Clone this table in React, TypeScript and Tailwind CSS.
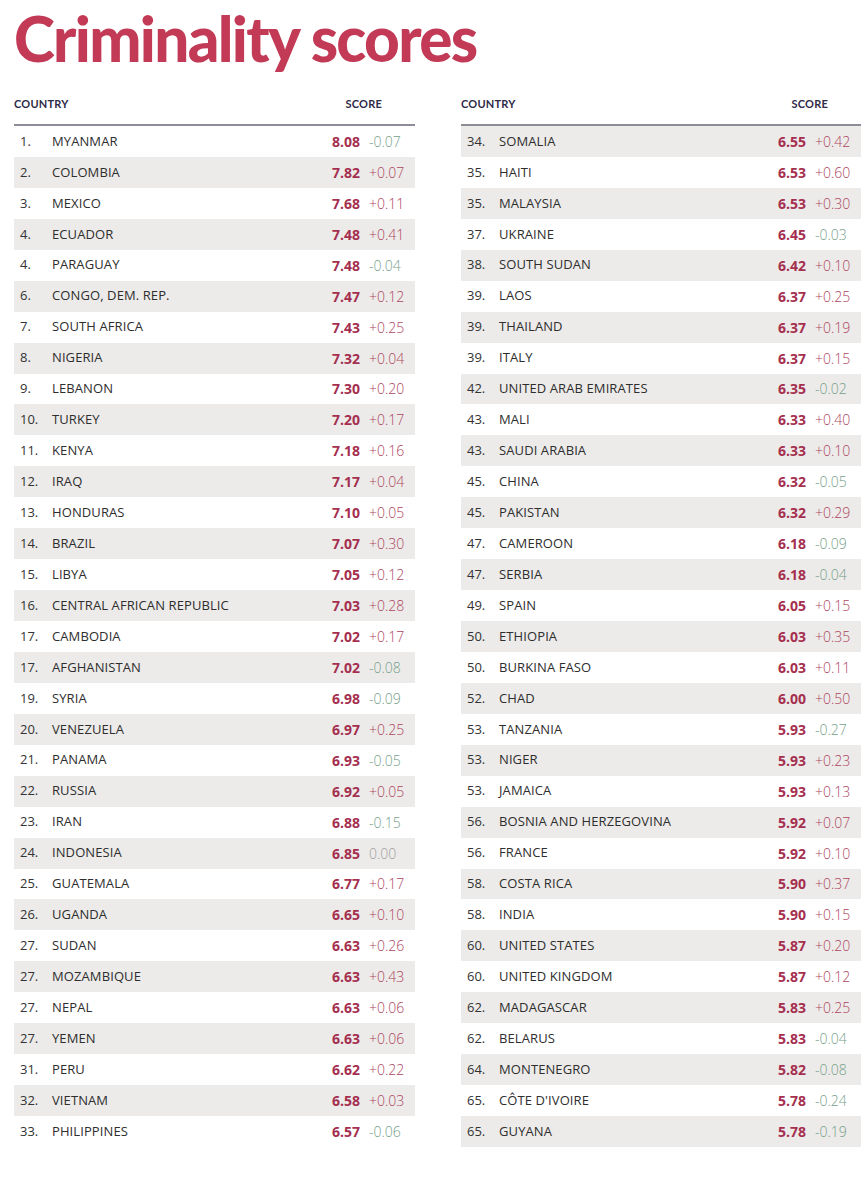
import React from "react";

type Row = [string, string, string, string];

const left: Row[] = [
  ["1.", "MYANMAR", "8.08", "-0.07"],
  ["2.", "COLOMBIA", "7.82", "+0.07"],
  ["3.", "MEXICO", "7.68", "+0.11"],
  ["4.", "ECUADOR", "7.48", "+0.41"],
  ["4.", "PARAGUAY", "7.48", "-0.04"],
  ["6.", "CONGO, DEM. REP.", "7.47", "+0.12"],
  ["7.", "SOUTH AFRICA", "7.43", "+0.25"],
  ["8.", "NIGERIA", "7.32", "+0.04"],
  ["9.", "LEBANON", "7.30", "+0.20"],
  ["10.", "TURKEY", "7.20", "+0.17"],
  ["11.", "KENYA", "7.18", "+0.16"],
  ["12.", "IRAQ", "7.17", "+0.04"],
  ["13.", "HONDURAS", "7.10", "+0.05"],
  ["14.", "BRAZIL", "7.07", "+0.30"],
  ["15.", "LIBYA", "7.05", "+0.12"],
  ["16.", "CENTRAL AFRICAN REPUBLIC", "7.03", "+0.28"],
  ["17.", "CAMBODIA", "7.02", "+0.17"],
  ["17.", "AFGHANISTAN", "7.02", "-0.08"],
  ["19.", "SYRIA", "6.98", "-0.09"],
  ["20.", "VENEZUELA", "6.97", "+0.25"],
  ["21.", "PANAMA", "6.93", "-0.05"],
  ["22.", "RUSSIA", "6.92", "+0.05"],
  ["23.", "IRAN", "6.88", "-0.15"],
  ["24.", "INDONESIA", "6.85", "0.00"],
  ["25.", "GUATEMALA", "6.77", "+0.17"],
  ["26.", "UGANDA", "6.65", "+0.10"],
  ["27.", "SUDAN", "6.63", "+0.26"],
  ["27.", "MOZAMBIQUE", "6.63", "+0.43"],
  ["27.", "NEPAL", "6.63", "+0.06"],
  ["27.", "YEMEN", "6.63", "+0.06"],
  ["31.", "PERU", "6.62", "+0.22"],
  ["32.", "VIETNAM", "6.58", "+0.03"],
  ["33.", "PHILIPPINES", "6.57", "-0.06"],
];

const right: Row[] = [
  ["34.", "SOMALIA", "6.55", "+0.42"],
  ["35.", "HAITI", "6.53", "+0.60"],
  ["35.", "MALAYSIA", "6.53", "+0.30"],
  ["37.", "UKRAINE", "6.45", "-0.03"],
  ["38.", "SOUTH SUDAN", "6.42", "+0.10"],
  ["39.", "LAOS", "6.37", "+0.25"],
  ["39.", "THAILAND", "6.37", "+0.19"],
  ["39.", "ITALY", "6.37", "+0.15"],
  ["42.", "UNITED ARAB EMIRATES", "6.35", "-0.02"],
  ["43.", "MALI", "6.33", "+0.40"],
  ["43.", "SAUDI ARABIA", "6.33", "+0.10"],
  ["45.", "CHINA", "6.32", "-0.05"],
  ["45.", "PAKISTAN", "6.32", "+0.29"],
  ["47.", "CAMEROON", "6.18", "-0.09"],
  ["47.", "SERBIA", "6.18", "-0.04"],
  ["49.", "SPAIN", "6.05", "+0.15"],
  ["50.", "ETHIOPIA", "6.03", "+0.35"],
  ["50.", "BURKINA FASO", "6.03", "+0.11"],
  ["52.", "CHAD", "6.00", "+0.50"],
  ["53.", "TANZANIA", "5.93", "-0.27"],
  ["53.", "NIGER", "5.93", "+0.23"],
  ["53.", "JAMAICA", "5.93", "+0.13"],
  ["56.", "BOSNIA AND HERZEGOVINA", "5.92", "+0.07"],
  ["56.", "FRANCE", "5.92", "+0.10"],
  ["58.", "COSTA RICA", "5.90", "+0.37"],
  ["58.", "INDIA", "5.90", "+0.15"],
  ["60.", "UNITED STATES", "5.87", "+0.20"],
  ["60.", "UNITED KINGDOM", "5.87", "+0.12"],
  ["62.", "MADAGASCAR", "5.83", "+0.25"],
  ["62.", "BELARUS", "5.83", "-0.04"],
  ["64.", "MONTENEGRO", "5.82", "-0.08"],
  ["65.", "CÔTE D'IVOIRE", "5.78", "-0.24"],
  ["65.", "GUYANA", "5.78", "-0.19"],
];

function deltaClass(d: string) {
  if (d.startsWith("+")) return "text-[#ad4560]";
  if (d.startsWith("-")) return "text-[#76a08a]";
  return "text-[#a0a0a0]";
}

function Table({ rows, offset, widthClass }: { rows: Row[]; offset: number; widthClass: string }) {
  return (
    <div className={`${widthClass} flex flex-col`}>
      <div className="flex items-center h-[16px] font-['Lato',sans-serif] font-bold text-[11px] text-[#2f2a47] tracking-[0.2px]">
        <span className="flex-1">COUNTRY</span>
        <span className="pr-[33px]">SCORE</span>
      </div>
      <div className="mt-[12px] h-[2px] bg-[#8e8c96]" />
      <div className="flex flex-col font-['Open_Sans',sans-serif]">
        {rows.map((r, i) => {
          const gray = (i + offset) % 2 === 1;
          return (
            <div
              key={i}
              className={`flex items-center h-[30.94px] ${gray ? "bg-[#ecebe9]" : "bg-white"}`}
            >
              <span className="w-[38px] pl-[6px] text-[13px] text-[#333]">{r[0]}</span>
              <span className="flex-1 text-[13px] text-[#2e2e2e] tracking-[0.1px]">{r[1]}</span>
              <span className="text-[14px] font-bold text-[#a52f4f]">{r[2]}</span>
              <span className={`w-[46px] ml-[9px] text-[14px] font-light ${deltaClass(r[3])}`}>{r[3]}</span>
            </div>
          );
        })}
      </div>
    </div>
  );
}

export default function App() {
  return (
    <div className="w-[866px] h-[1200px] bg-white pl-[14px] pt-[6px]">
      <h1 className="font-['Lato',sans-serif] font-black text-[62px] leading-[64px] text-[#c23a56] tracking-[-1.7px]">
        Criminality scores
      </h1>
      <div className="flex gap-[46px] mt-[26px]">
        <Table rows={left} offset={0} widthClass="w-[401px]" />
        <Table rows={right} offset={1} widthClass="w-[400px]" />
      </div>
    </div>
  );
}
